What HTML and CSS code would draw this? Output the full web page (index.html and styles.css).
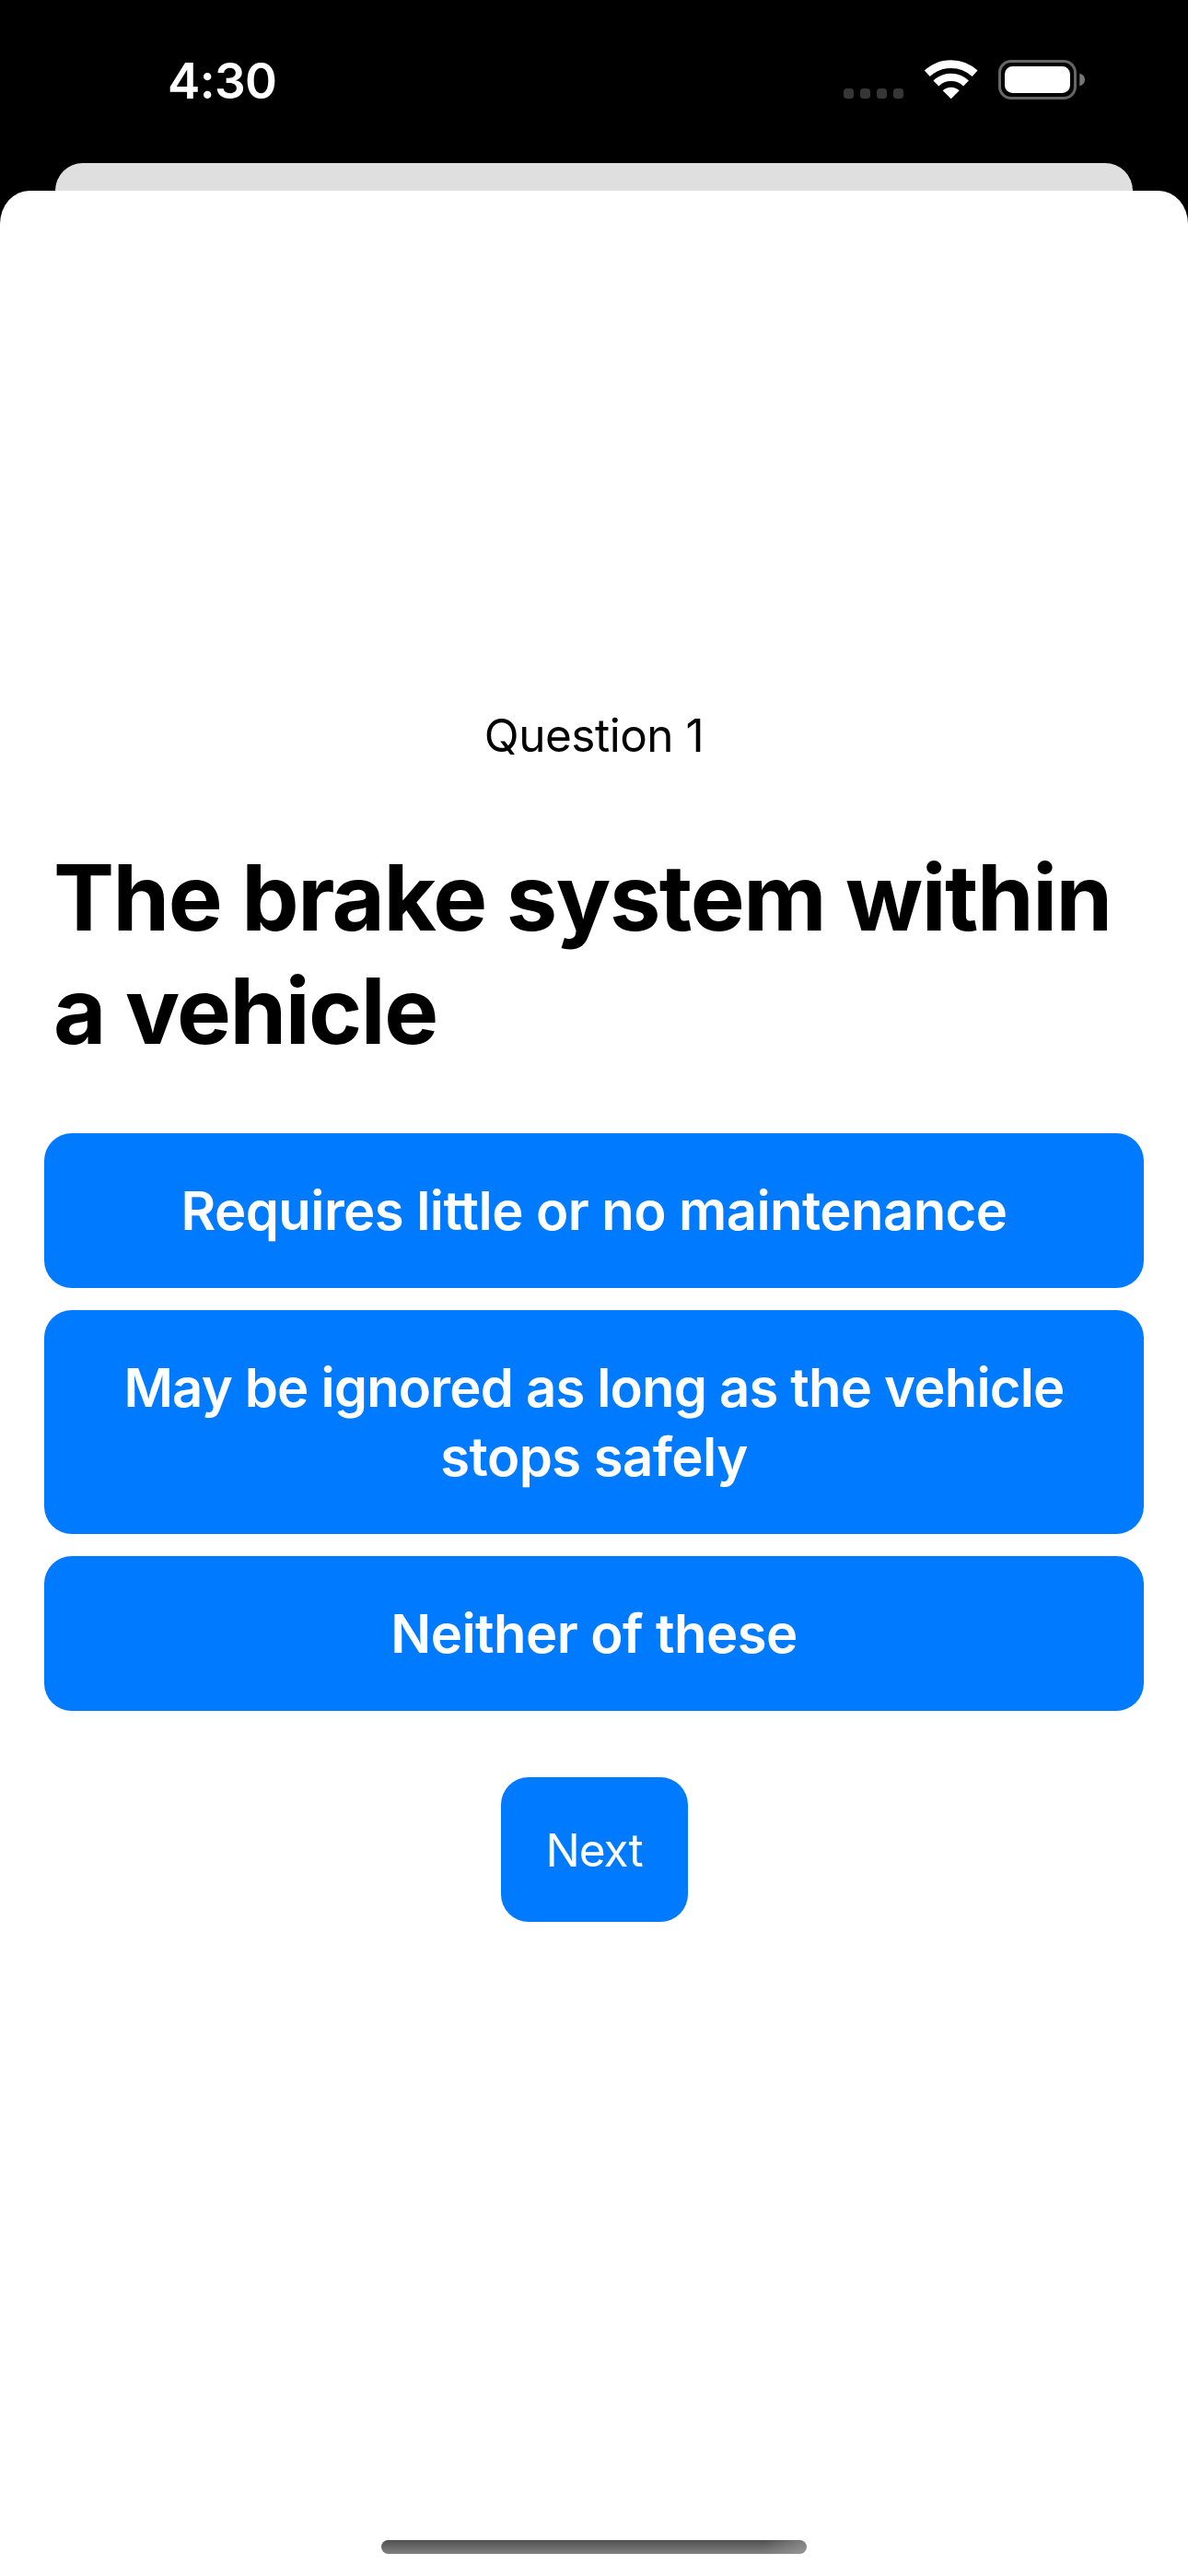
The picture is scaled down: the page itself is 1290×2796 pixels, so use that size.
FILE: index.html
```html
<!DOCTYPE html>
<html lang="en">
<head>
<meta charset="utf-8">
<title>Quiz</title>
<link rel="stylesheet" href="styles.css">
</head>
<body>
<header class="status">
  <span class="time">4:30</span>
  <svg class="icons" width="264" height="48" viewBox="0 0 264 48">
    <g fill="#363636"><rect x="0" y="33" width="11" height="11" rx="3.500"/><rect x="18" y="33" width="11" height="11" rx="3.500"/><rect x="36" y="33" width="11" height="11" rx="3.500"/><rect x="54" y="33" width="11" height="11" rx="3.500"/></g>
    <g fill="none" stroke="#fff"><path stroke-width="8.800" d="M90.800 16.800A37.800 37.800 0 0 1 142.600 16.800"/><path stroke-width="8.400" d="M100.400 27.500A23.400 23.400 0 0 1 133 27.500"/></g>
    <path d="M116.700 44.300L107.700 35.300A13.300 13.300 0 0 1 125.700 35.300Z" fill="#fff"/>
    <rect x="169.500" y="3.500" width="82" height="40" rx="12.500" fill="none" stroke="#666" stroke-width="3"/>
    <rect x="175" y="9" width="71" height="29" rx="8.500" fill="#fff"/>
    <path d="M256.300 16.700Q262 18.500 262 23.500T256.300 30.300Z" fill="#777"/>
  </svg>
</header>
<div class="backdrop"></div>
<main class="sheet">
  <p class="count">Question 1</p>
  <h1>The brake system within<br>a vehicle</h1>
  <div class="answers">
    <button class="answer">Requires little or no maintenance</button>
    <button class="answer tall"><span class="long">May be ignored as long as the vehicle</span><span>stops safely</span></button>
    <button class="answer">Neither of these</button>
  </div>
  <button class="next">Next</button>
  <div class="home"></div>
</main>
</body>
</html>
```
FILE: styles.css
```css
* { box-sizing: border-box; }
body { margin: 0; height: 2796px; background: #000; font-family: Inter, sans-serif; display: flex; flex-direction: column; overflow: hidden; }
.status { height: 177px; flex: none; display: flex; justify-content: space-between; padding: 63px 110px 0 182px; color: #fff; }
.time { font-size: 53px; line-height: 51px; font-weight: 600; letter-spacing: -0.6px; }
.icons { display: block; }
.backdrop { height: 30px; flex: none; margin: 0 60px; background: #e0dfe0; border-radius: 30px 30px 0 0; }
.sheet { flex: 1; background: #fff; border-radius: 32px 32px 0 0 / 36px 36px 0 0; display: flex; flex-direction: column; align-items: center; padding: 561px 48px 24px; }
.count { margin: 0; font-size: 49.5px; line-height: 61px; letter-spacing: -0.5px; }
h1 { align-self: stretch; margin: 84px 0 0 10px; font-size: 99px; line-height: 123px; font-weight: 700; letter-spacing: -1.48px; white-space: nowrap; }
.answers { width: 100%; display: flex; flex-direction: column; gap: 24px; margin-top: 71px; }
button { border: 0; margin: 0; padding: 0; font-family: inherit; color: #fff; background: #007aff; border-radius: 30px; }
.answer { height: 168px; display: flex; flex-direction: column; align-items: center; justify-content: center; font-size: 58px; line-height: 75px; font-weight: 600; letter-spacing: -0.56px; white-space: nowrap; }
.tall { height: 243px; }
.long { letter-spacing: -0.82px; }
.next { width: 203px; height: 157px; margin-top: 72px; font-size: 49.5px; letter-spacing: -1px; }
.home { width: 462px; height: 15px; margin-top: auto; border-radius: 8px; background: linear-gradient(90deg, transparent 90%, #aaa8), linear-gradient(#505050, #808080); }
```
